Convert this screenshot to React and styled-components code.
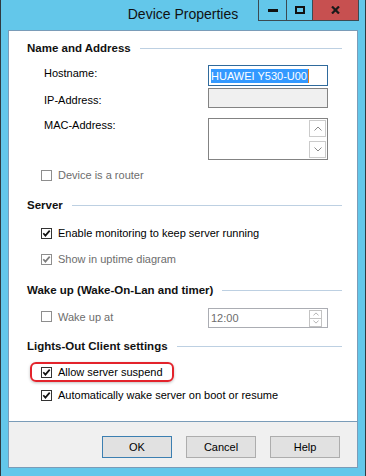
import React from 'react';
import styled, { createGlobalStyle } from 'styled-components';

const GlobalStyle = createGlobalStyle`
  html, body {
    margin: 0;
    padding: 0;
    background: #ffffff;
  }
  body {
    font-family: "Liberation Sans", Arial, sans-serif;
    font-size: 11px;
    color: #000;
  }
`;

const Window = styled.div`
  width: 366px;
  height: 476px;
  box-sizing: border-box;
  background: #63c7ea;
  border-left: 1px solid #2f3a40;
  border-right: 1px solid #2f3a40;
  padding: 0 7px 8px 7px;
  display: flex;
  flex-direction: column;
`;

const TitleBar = styled.div`
  height: 30px;
  flex-shrink: 0;
  display: grid;
  grid-template-columns: 1fr auto 1fr;
  align-items: start;
`;

const Title = styled.div`
  grid-column: 2;
  font-size: 14px;
  line-height: 29px;
  color: #111;
  white-space: nowrap;
`;

const Controls = styled.div`
  grid-column: 3;
  justify-self: end;
  margin-right: -1px;
  display: flex;
  border-left: 1px solid #3b4a52;
`;

const CtrlButton = styled.div`
  width: ${(p) => p.$w}px;
  height: 20px;
  border-right: 1px solid #3b4a52;
  border-bottom: 1px solid #3b4a52;
  background: ${(p) => (p.$close ? '#c75050' : 'transparent')};
  display: flex;
  align-items: center;
  justify-content: center;
`;

const Client = styled.div`
  flex: 1;
  display: flex;
  flex-direction: column;
  border: 1px solid #7a9cb8;
`;

const Panel = styled.div`
  flex: 1;
  background: #ffffff;
  padding: 10px 15px 0 18px;
  display: flex;
  flex-direction: column;
`;

const SectionHeader = styled.div`
  display: flex;
  align-items: center;
  gap: 9px;
  height: 14px;
  margin-top: ${(p) => p.$mt || 0}px;
`;

const SectionTitle = styled.div`
  font-weight: bold;
  font-size: 11.5px;
  line-height: 14px;
  color: #111;
  white-space: nowrap;
`;

const Rule = styled.div`
  flex: 1;
  height: 1px;
  background: #bdd0e2;
`;

const FieldRow = styled.div`
  display: flex;
  align-items: flex-start;
  padding-left: 17px;
  height: ${(p) => p.$h}px;
  margin-top: ${(p) => p.$mt}px;
`;

const Label = styled.div`
  width: 164px;
  line-height: 14px;
  padding-top: ${(p) => p.$pt || 0}px;
`;

const TextBox = styled.div`
  box-sizing: border-box;
  width: 120px;
  height: 100%;
  border: 1px solid ${(p) => (p.$focus ? '#2f6a9c' : '#838383')};
  background: ${(p) => (p.$disabled ? '#f0f0f0' : '#ffffff')};
  display: flex;
  align-items: center;
  padding-left: 2px;
`;

const Selection = styled.span`
  background: #3399ff;
  color: #ffffff;
  line-height: 14px;
  font-size: 11px;
  padding: 0 1px 0 0;
`;

const Caret = styled.span`
  width: 1px;
  height: 14px;
  background: #e37b1c;
`;

const MemoBox = styled.div`
  box-sizing: border-box;
  width: 120px;
  height: 42px;
  border: 1px solid #838383;
  background: #fff;
  display: flex;
  justify-content: flex-end;
  padding: 1px;
`;

const ScrollBar = styled.div`
  width: 17px;
  display: flex;
  flex-direction: column;
  justify-content: space-between;
`;

const ScrollButton = styled.div`
  box-sizing: border-box;
  height: 17px;
  border: 1px solid #cbcbcb;
  display: flex;
  align-items: center;
  justify-content: center;
`;

const CheckRow = styled.div`
  position: relative;
  display: flex;
  align-items: center;
  gap: 6px;
  height: 18px;
  padding-left: 14px;
  margin-top: ${(p) => p.$mt}px;
  color: ${(p) => (p.$disabled ? '#6d6d6d' : '#000')};
  ${(p) =>
    p.$highlight &&
    `
    &::after {
      content: '';
      position: absolute;
      left: 3px;
      top: -1px;
      width: 140px;
      height: 16px;
      border: 2px solid #e3232b;
      border-radius: 6px;
      box-shadow: 0 1px 3px rgba(0, 0, 0, 0.25);
    }
  `}
`;

const WakeRow = styled.div`
  display: flex;
  align-items: center;
  height: 20px;
  margin-top: ${(p) => p.$mt}px;
`;

const WakeCheck = styled(CheckRow)`
  width: 181px;
  box-sizing: border-box;
`;

const TimeBox = styled.div`
  box-sizing: border-box;
  width: 120px;
  height: 20px;
  border: 1px solid #abadb3;
  display: flex;
  align-items: center;
  justify-content: space-between;
  padding: 0 5px 0 2px;
  color: #6d6d6d;
`;

const Spinner = styled.div`
  display: flex;
  flex-direction: column;
`;

const SpinButton = styled.div`
  box-sizing: border-box;
  width: 13px;
  height: 9px;
  border: 1px solid #c3c3c3;
  margin-top: ${(p) => (p.$down ? '-1px' : '0')};
  display: flex;
  align-items: center;
  justify-content: center;
`;

const Footer = styled.div`
  height: 46px;
  flex-shrink: 0;
  background: #f0f0f0;
  border-top: 1px solid #7a9cb8;
  display: flex;
  justify-content: flex-end;
  align-items: flex-start;
  gap: 14px;
  padding: 14px 17px 0 0;
  box-sizing: border-box;
`;

const Button = styled.div`
  box-sizing: border-box;
  width: 70px;
  height: 22px;
  background: #e1e1e1;
  border: 1px solid ${(p) => (p.$default ? '#3c7fb1' : '#adadad')};
  display: flex;
  align-items: center;
  justify-content: center;
`;

const CheckBox = ({ checked, disabled }) => {
  const border = disabled ? '#8e8e8e' : '#333333';
  const mark = disabled ? '#7d7d7d' : '#111111';
  return (
    <svg width="11" height="11" viewBox="0 0 11 11" style={{ flexShrink: 0 }}>
      <rect x="0.5" y="0.5" width="10" height="10" fill="#fff" stroke={border} />
      {checked && (
        <path d="M2.3 5.3 L4.4 7.6 L8.7 2.6" fill="none" stroke={mark} strokeWidth="1.7" />
      )}
    </svg>
  );
};

const Chevron = ({ up, size = 8, color = '#8a8a8a' }) => (
  <svg width={size} height={size / 2 + 1} viewBox="0 0 8 5">
    <path d={up ? 'M0.5 4.5 L4 1 L7.5 4.5' : 'M0.5 0.5 L4 4 L7.5 0.5'} fill="none" stroke={color} strokeWidth="1" />
  </svg>
);

const Check = ({ checked, disabled, mt, highlight, children }) => (
  <CheckRow $mt={mt} $disabled={disabled} $highlight={highlight}>
    <CheckBox checked={checked} disabled={disabled} />
    <span>{children}</span>
  </CheckRow>
);

const Header = ({ mt, children }) => (
  <SectionHeader $mt={mt}>
    <SectionTitle>{children}</SectionTitle>
    <Rule />
  </SectionHeader>
);

export default function App() {
  return (
    <>
      <GlobalStyle />
      <Window>
        <TitleBar>
          <Title>Device Properties</Title>
          <Controls>
            <CtrlButton $w={27}>
              <svg width="10" height="3"><rect width="10" height="3" fill="#111" /></svg>
            </CtrlButton>
            <CtrlButton $w={25}>
              <svg width="10" height="8">
                <rect x="1" y="1" width="8" height="6" fill="none" stroke="#111" strokeWidth="2" />
              </svg>
            </CtrlButton>
            <CtrlButton $w={45} $close>
              <svg width="9" height="8" viewBox="0 0 9 8">
                <path d="M1 0.5 L8 7.5 M8 0.5 L1 7.5" stroke="#1a1a1a" strokeWidth="2.2" />
              </svg>
            </CtrlButton>
          </Controls>
        </TitleBar>
        <Client>
          <Panel>
            <Header mt={0}>Name and Address</Header>
            <FieldRow $h={21} $mt={10}>
              <Label $pt={1}>Hostname:</Label>
              <TextBox $focus>
                <Selection>HUAWEI Y530-U00</Selection>
                <Caret />
              </TextBox>
            </FieldRow>
            <FieldRow $h={20} $mt={2}>
              <Label $pt={5}>IP-Address:</Label>
              <TextBox $disabled />
            </FieldRow>
            <FieldRow $h={42} $mt={10}>
              <Label $pt={0}>MAC-Address:</Label>
              <MemoBox>
                <ScrollBar>
                  <ScrollButton><Chevron up /></ScrollButton>
                  <ScrollButton><Chevron /></ScrollButton>
                </ScrollBar>
              </MemoBox>
            </FieldRow>
            <Check mt={6} disabled>Device is a router</Check>

            <Header mt={14}>Server</Header>
            <Check mt={12} checked>Enable monitoring to keep server running</Check>
            <Check mt={8} checked disabled>Show in uptime diagram</Check>

            <Header mt={15}>Wake up (Wake-On-Lan and timer)</Header>
            <WakeRow $mt={11}>
              <WakeCheck $mt={-3} $disabled>
                <CheckBox disabled />
                <span>Wake up at</span>
              </WakeCheck>
              <TimeBox>
                <span>12:00</span>
                <Spinner>
                  <SpinButton><Chevron up size={6} color="#9a9a9a" /></SpinButton>
                  <SpinButton $down><Chevron size={6} color="#9a9a9a" /></SpinButton>
                </Spinner>
              </TimeBox>
            </WakeRow>

            <Header mt={11}>Lights-Out Client settings</Header>
            <Check mt={10} checked highlight>Allow server suspend</Check>
            <Check mt={5} checked>Automatically wake server on boot or resume</Check>
          </Panel>
          <Footer>
            <Button $default>OK</Button>
            <Button>Cancel</Button>
            <Button>Help</Button>
          </Footer>
        </Client>
      </Window>
    </>
  );
}
